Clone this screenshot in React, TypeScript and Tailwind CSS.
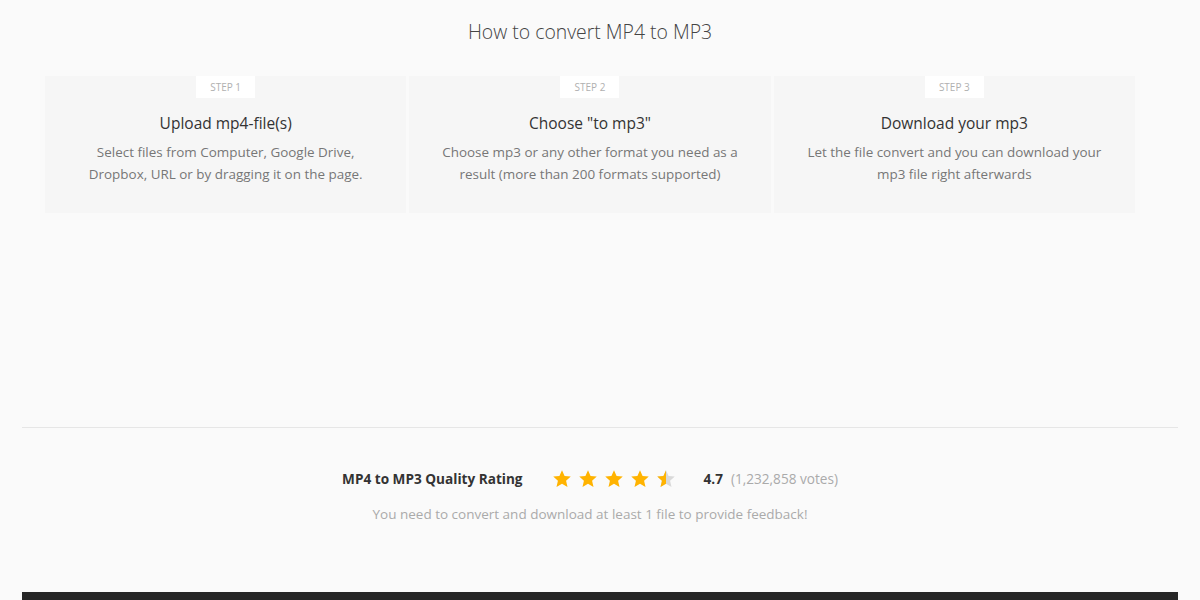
import React from "react"

const steps = [
  {
    label: "STEP 1",
    title: "Upload mp4-file(s)",
    lines: ["Select files from Computer, Google Drive,", "Dropbox, URL or by dragging it on the page."],
  },
  {
    label: "STEP 2",
    title: 'Choose "to mp3"',
    lines: ["Choose mp3 or any other format you need as a", "result (more than 200 formats supported)"],
  },
  {
    label: "STEP 3",
    title: "Download your mp3",
    lines: ["Let the file convert and you can download your", "mp3 file right afterwards"],
  },
]

const STAR = "M12 1.5l3.1 6.9 7.4.7-5.6 5 1.7 7.4L12 17.6 5.4 21.5l1.7-7.4-5.6-5 7.4-.7z"

function Star({ half }: { half?: boolean }) {
  return (
    <svg width="20" height="20" viewBox="0 0 24 24">
      <defs>
        <clipPath id="halfclip">
          <rect x="0" y="0" width="12" height="24" />
        </clipPath>
      </defs>
      {half ? (
        <>
          <path d={STAR} fill="#d9d9d9" />
          <path d={STAR} fill="#ffb300" clipPath="url(#halfclip)" />
        </>
      ) : (
        <path d={STAR} fill="#ffb300" />
      )}
    </svg>
  )
}

export default function App() {
  return (
    <div className="h-[600px] bg-[#fafafa] font-['Open_Sans',sans-serif] overflow-hidden">
      <div className="mx-[22px]">
        <div className="ml-[23px] w-[1090px]">
          <h2 className="pt-[18px] text-center text-[19.4px] font-light leading-[28px] text-[#444]">
            How to convert MP4 to MP3
          </h2>

          <div className="mt-[30px] grid grid-cols-3 gap-[3px]">
            {steps.map((step) => (
              <div key={step.label} className="flex h-[137px] flex-col items-center bg-[#f6f6f6]">
                <div className="flex h-[22px] w-[59px] items-center justify-center bg-white text-[10px] uppercase text-[#b0b0b0]">
                  {step.label}
                </div>
                <div className="mt-[14px] text-[15.5px] leading-[22px] text-[#333]">{step.title}</div>
                <div className="mt-[7px] text-center text-[13.45px] leading-[22px] text-[#777]">
                  {step.lines.map((l) => (
                    <div key={l}>{l}</div>
                  ))}
                </div>
              </div>
            ))}
          </div>
        </div>

        <div className="mt-[214px] border-t border-[#e6e6e6]" />

        <div className="ml-[23px] w-[1090px] pt-[41px]">
          <div className="flex items-center justify-center">
            <span className="text-[13.6px] font-bold text-[#333]">MP4 to MP3 Quality Rating</span>
            <div className="ml-[29px] flex items-center gap-[6px]">
              <Star />
              <Star />
              <Star />
              <Star />
              <Star half />
            </div>
            <span className="ml-[28px] text-[13.6px] font-bold text-[#333]">4.7</span>
            <span className="ml-[8px] text-[13.6px] text-[#aaa]">(1,232,858 votes)</span>
          </div>
          <div className="mt-[15px] text-center text-[13.5px] text-[#aaa]">
            You need to convert and download at least 1 file to provide feedback!
          </div>
        </div>

        <div className="mt-[67px] h-[8px] bg-[#262626]" />
      </div>
    </div>
  )
}
